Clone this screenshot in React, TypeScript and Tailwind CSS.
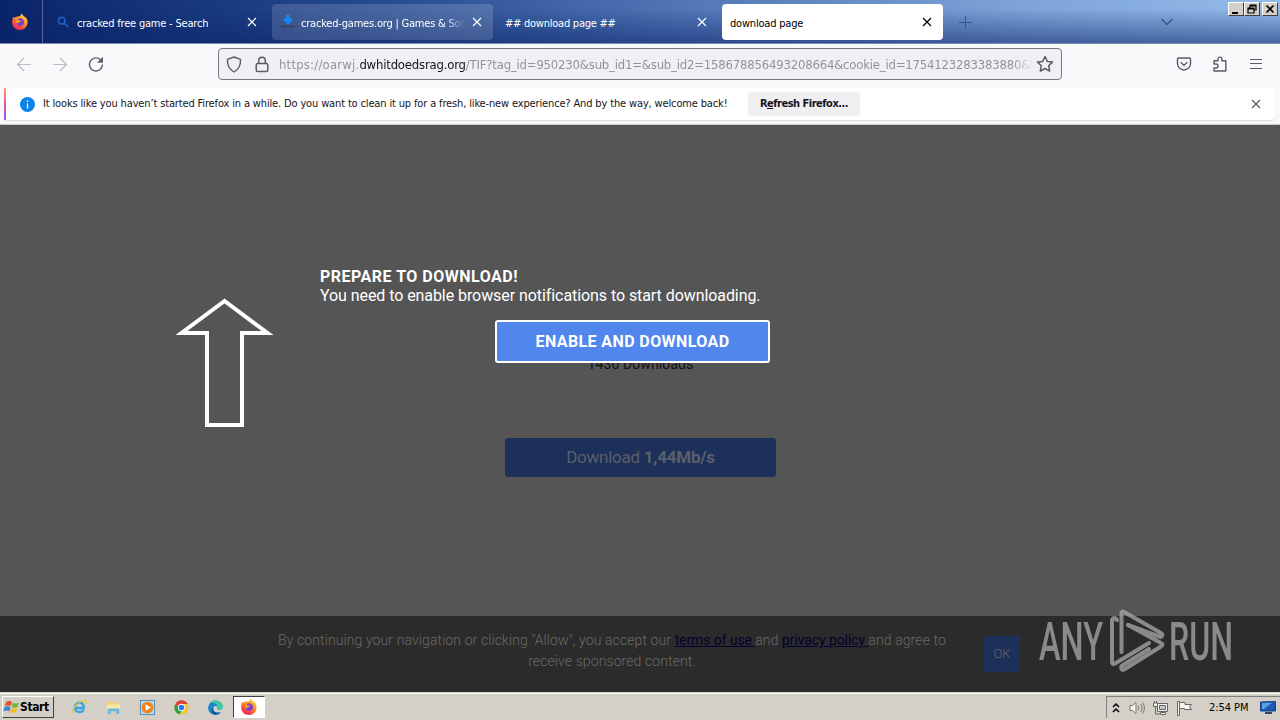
import { type ReactNode } from "react";

type Tab = {
  title: string;
  text: string;
  icon?: ReactNode;
  className: string;
};

function CloseIcon({ className }: { className?: string }) {
  return (
    <svg className={className} width="10" height="10" viewBox="0 0 10 10" fill="none" stroke="currentColor" strokeWidth="1.2">
      <path d="M1 1l8 8M9 1L1 9" />
    </svg>
  );
}

function FirefoxIcon() {
  return (
    <svg width="18" height="18" viewBox="0 0 18 18">
      <defs>
        <linearGradient id="flame" x1="0.85" y1="0" x2="0.25" y2="1">
          <stop offset="0" stopColor="#ffe14a" />
          <stop offset="0.4" stopColor="#ff9a1f" />
          <stop offset="0.75" stopColor="#ff4a3d" />
          <stop offset="1" stopColor="#e0226f" />
        </linearGradient>
      </defs>
      <path fill="url(#flame)" d="M2 4.2C2.6 3.9 3 4.4 3.5 4.8 4.5 3.9 6 3.5 7.4 3.6 8 3 9 2.8 9.6 3 9.4 1.9 10 1 10.8.5c.4 1.7 1.5 2 2.4 3 .8.3 1.300.6 1.800 1.200.9 1 1.500 2.500 1.600 4.300 0 4.500-3.300 8-7.700 8C4.500 17 1.200 13.700 1.200 9.500c0-2 .3-3.600.8-5.300z" />
      <path fill="#7a3fd6" d="M9 5.200c2.600 0 4.100 1.800 4.100 4S11.400 13 9.200 13 5.300 11.500 5.300 9.300c1 .6 2 .3 2.900-.5L6.500 7.200C6.900 6 7.800 5.200 9 5.200z" />
      <path fill="#ff9a1f" d="M5 7.200c1-.6 2.200-.4 3 .1l2 .4c-.2 1-1.400 1.200-2 1.600-.5 1.200-2 1-3.200.3z" />
    </svg>
  );
}

function SearchIcon() {
  return (
    <svg width="12" height="12" viewBox="0 0 12 12" fill="none" stroke="#1c62c4" strokeWidth="1.7">
      <circle cx="4.700" cy="4.700" r="3.300" />
      <path d="M7.200 7.200l4 4" />
    </svg>
  );
}

function DownloadIcon() {
  return (
    <svg width="16" height="14" viewBox="0 0 16 14">
      <path fill="#3c4668" d="M1 10h14v3H1z" />
      <path fill="#1489f5" d="M6 0h4v4h3.500L8 9.500 2.500 4H6z" />
    </svg>
  );
}

const tabs: Tab[] = [
  { title: "cracked free game - Search", text: "tracking-[-0.2px]", icon: <SearchIcon />, className: "pl-[10px] gap-2 text-white" },
  { title: "cracked-games.org | Games & Sof", text: "tracking-[-0.2px] w-[166px] [mask-image:linear-gradient(to_left,transparent_2px,#000_22px)]", icon: <DownloadIcon />, className: "pl-2 gap-[5px] bg-white/15 text-white" },
  { title: "## download page ##", text: "tracking-[-0.24px]", className: "pl-2 text-white" },
  { title: "download page", text: "tracking-[-0.2px]", className: "pl-2 bg-white text-black" },
];

function TabBar() {
  return (
    <header className="flex h-11 shrink-0 border-b border-[#7c8cab] bg-[linear-gradient(to_bottom,rgba(10,36,106,0)_20%,rgba(10,36,106,0.55)),linear-gradient(to_right,#0a246a,#24488c_28%,#5478b8_55%,#7ea4d8_80%,#93bbea)]">
      <div className="flex w-[43px] items-center justify-center border-r border-white/30 pr-[2px]">
        <FirefoxIcon />
      </div>
      <div className="flex gap-1 py-1 pl-1">
        {tabs.map(tab => (
          <div key={tab.title} className={`flex h-9 w-[221px] items-center rounded-sm pr-[11px] ${tab.className}`}>
            {tab.icon}
            <span className={`overflow-hidden whitespace-nowrap pt-1 text-[11px] ${tab.text}`}>{tab.title}</span>
            <CloseIcon className="ml-auto shrink-0" />
          </div>
        ))}
      </div>
      <svg className="ml-4 mt-4 shrink-0 text-[#3d5685]" width="13" height="13" viewBox="0 0 13 13" fill="none" stroke="currentColor">
        <path d="M6.500 0v13M0 6.500h13" />
      </svg>
      <svg className="ml-auto mt-[18px] shrink-0 text-[#3b5887]" width="14" height="9" viewBox="0 0 14 9" fill="none" stroke="currentColor" strokeWidth="1.500">
        <path d="M1.500 1L7 6.500 12.500 1" />
      </svg>
      <div className="ml-[54px] mt-[2px] flex h-[14px] pr-[2px]">
        <WindowButton>
          <path d="M3 10h6" strokeWidth="2" />
        </WindowButton>
        <WindowButton>
          <path d="M5 2h6v5H9M5 2v3M5 3h6M3 5h6v5H3zM3 6h6" />
        </WindowButton>
        <span className="w-[2px]" />
        <WindowButton>
          <path d="M3.500 2.500l7 7M10.500 2.500l-7 7" strokeWidth="1.700" />
        </WindowButton>
      </div>
    </header>
  );
}

function WindowButton({ children }: { children: ReactNode }) {
  return (
    <button className="h-[14px] w-4 border border-b-[#404040] border-l-white border-r-[#404040] border-t-white bg-[#d4d0c8]">
      <svg width="14" height="12" viewBox="0 0 14 12" fill="none" stroke="#000" strokeWidth="1.200">
        {children}
      </svg>
    </button>
  );
}

function Toolbar() {
  return (
    <div className="flex h-[44px] shrink-0 items-start bg-[#f9f9fb] text-[#5b5b66]">
      <div className="flex w-[218px] gap-5 pl-4 pt-3">
        <svg className="text-[#bcbcc2]" width="16" height="16" viewBox="0 0 16 16" fill="none" stroke="currentColor" strokeWidth="1.200">
          <path d="M15 8.500H1.500M8 2L1.500 8.500 8 15" />
        </svg>
        <svg className="text-[#bcbcc2]" width="16" height="16" viewBox="0 0 16 16" fill="none" stroke="currentColor" strokeWidth="1.200">
          <path d="M1 8.500h13.500M8 2l6.500 6.500L8 15" />
        </svg>
        <svg width="16" height="16" viewBox="0 0 16 16" fill="none" stroke="currentColor" strokeWidth="1.400">
          <path d="M13.200 4.500A6.500 6.500 0 1 0 14.500 8.500" />
          <path fill="currentColor" stroke="none" d="M15 .8v6H9z" />
        </svg>
      </div>
      <div className="mt-1 flex h-8 w-[844px] items-center rounded-[4px] border border-[#75757e] bg-[#f0f0f4] pl-[7px] pr-[7px]">
        <svg className="shrink-0" width="16" height="17" viewBox="0 0 16 17" fill="none" stroke="currentColor" strokeWidth="1.400">
          <path d="M8 1l6.500 2.400c.4 5.500-1.500 9.800-6.500 12.600C3 13.200 1.100 8.900 1.500 3.400z" strokeLinejoin="round" />
        </svg>
        <svg className="ml-3 shrink-0" width="16" height="17" viewBox="0 0 16 17" fill="none" stroke="currentColor" strokeWidth="1.500">
          <rect x="2.200" y="7.500" width="11.600" height="8" rx="1.500" />
          <path d="M4.700 7.500V4.500a3.300 3.300 0 0 1 6.600 0v3" />
        </svg>
        <div className="ml-[9px] w-[757px] overflow-hidden whitespace-nowrap pt-px text-[13px] tracking-[-0.2px] text-[#929299] [mask-image:linear-gradient(to_left,transparent_3px,#000_24px)]">
          <span className="tracking-[0.2px]">https://oarwj.</span>
          <span className="text-[#15141a]">dwhitdoedsrag.org</span>/TIF?tag_id=950230&amp;sub_id1=&amp;sub_id2=158678856493208664&amp;cookie_id=1754123283383880&amp;l
        </div>
        <svg className="ml-auto shrink-0" width="18" height="18" viewBox="0 0 18 18" fill="none" stroke="currentColor" strokeWidth="1.500" strokeLinejoin="round">
          <path d="M9 1.500l2.300 4.900 5.200.7-3.800 3.700 1 5.300L9 13.500l-4.700 2.600 1-5.300L1.500 7.100l5.200-.7z" />
        </svg>
      </div>
      <div className="ml-auto flex gap-5 pr-4 pt-3">
        <svg width="16" height="16" viewBox="0 0 16 16" fill="none" stroke="currentColor" strokeWidth="1.400" strokeLinejoin="round">
          <path d="M2.500 2h11c.6 0 1 .4 1 1v4.500a6.500 6.500 0 0 1-13 0V3c0-.6.4-1 1-1z" />
          <path d="M4.700 6.300L8 9.400l3.300-3.100" />
        </svg>
        <svg width="16" height="16" viewBox="0 0 16 16" fill="none" stroke="currentColor" strokeWidth="1.400" strokeLinejoin="round">
          <path d="M2 7V4.800h4V3a1.900 1.900 0 0 1 3.800 0v1.800h4V15H2v-3h2a2 2 0 0 0 0-4H2z" />
        </svg>
        <svg width="16" height="16" viewBox="0 0 16 16" fill="none" stroke="currentColor" strokeWidth="1.200">
          <path d="M2 3.500h12M2 7.500h12M2 12.500h12" />
        </svg>
      </div>
    </div>
  );
}

function NotificationBar() {
  return (
    <div className="h-[37px] shrink-0 border-b border-[#cccccc] bg-[#f9f9fb] pl-1 pr-[5px]">
      <div className="flex h-8 items-center rounded-[4px] bg-white shadow-[0_1px_1px_rgba(0,0,0,0.12)]">
        <span className="h-8 w-[2px] bg-linear-to-b from-[#ff9a6b] via-[#e0509a] to-[#9059ff]" />
        <svg className="ml-[14px]" width="15" height="15" viewBox="0 0 15 15">
          <circle cx="7.500" cy="7.500" r="7.500" fill="#0b84e8" />
          <path d="M7.500 3.500v1.500M7.500 6.500v5" stroke="#fff" strokeWidth="1.300" />
        </svg>
        <span className="ml-2 w-[705px] whitespace-nowrap text-[11px] tracking-[-0.145px] text-[#15141a]">
          It looks like you haven’t started Firefox in a while. Do you want to clean it up for a fresh, like-new experience? And by the way, welcome back!
        </span>
        <button className="h-6 w-28 rounded-[4px] bg-[#efeff1] pt-px text-[11px] font-bold tracking-[-0.5px] text-[#15141a]">
          R<u>e</u>fresh Firefox...
        </button>
        <CloseIcon className="ml-auto mr-[14px] text-[#5b5b66]" />
      </div>
    </div>
  );
}

function AnyRunLogo() {
  return (
    <svg className="absolute bottom-[17px] right-[36px]" width="206" height="66" viewBox="0 0 206 66" fill="none" opacity="0.75">
      <g fill="#aaaaaa" fontFamily="Roboto" fontWeight="500" fontSize="53">
        <text x="1" y="51" textLength="64" lengthAdjust="spacingAndGlyphs">ANY</text>
        <text x="131" y="51" textLength="64" lengthAdjust="spacingAndGlyphs">RUN</text>
      </g>
      <g stroke="#aaaaaa" strokeWidth="4" strokeLinecap="round" strokeLinejoin="round">
        <path d="M79 11l-2-2c-2 0-3 1-3 3v41c0 2 1 2.500 3 1.500L111 34" />
        <path d="M83.500 43V5c0-3 1-3 3.500-1.600L123 24c2.500 1.500 1 5-2 3.500L90 16" />
        <path d="M90 16l33 18c2 1 2 2 0 3.500L86 60.500c-3 1.500-4-3-1-4.500L111 40" />
      </g>
    </svg>
  );
}

function Page() {
  return (
    <main className="relative flex h-[567px] shrink-0 flex-col bg-[#555555] font-[Roboto,sans-serif]">
      <div className="flex grow flex-col items-center pl-px pt-[229px]">
        <p className="text-[14px] leading-5 tracking-[0.1px] text-[#111111]">1430 Downloads</p>
        <button className="mt-16 h-[39px] w-[271px] rounded-[3px] bg-[#1d3059] text-[17px] tracking-[-0.25px] text-[#5a5f6b]">
          Download <b>1,44Mb/s</b>
        </button>
      </div>
      <footer className="flex h-[76px] items-center bg-[#2b2b2b] pl-[262px]">
        <p className="w-[700px] pb-[6px] text-center text-[14px] font-light leading-[21px] tracking-[0.1px] text-[#6a6a6a]">
          By continuing your navigation or clicking "Allow", you accept our <span className="font-normal tracking-[-0.1px] text-[#04002c] underline">terms of use </span>
          and <span className="font-normal tracking-[-0.1px] text-[#04002c] underline">privacy policy </span>and agree to
          <br />
          receive sponsored content.
        </p>
        <button className="ml-[22px] h-9 w-9 bg-[#1d3059] text-[13px] font-light text-[#60636a]">OK</button>
      </footer>
      <div className="absolute inset-x-0 top-0 flex pl-[175px] pt-[142px] text-white">
        <svg className="mt-[30px] shrink-0" width="99" height="132" viewBox="0 0 99 132" fill="none" stroke="#fff" strokeWidth="4">
          <path d="M49.500 4L6.500 36H32v92h35V36h25.500z" />
        </svg>
        <div className="ml-[46px] w-[450px] whitespace-nowrap text-[16px] leading-[19px]">
          <h1 className="font-bold tracking-[0.5px]">PREPARE TO DOWNLOAD!</h1>
          <p className="tracking-[-0.07px]">You need to enable browser notifications to start downloading.</p>
          <button className="ml-[175px] mt-[15px] h-[43px] w-[275px] rounded-[3px] border-2 border-white bg-[#5186ec] text-[16px] font-bold tracking-[0.4px]">
            ENABLE AND DOWNLOAD
          </button>
        </div>
      </div>
      <AnyRunLogo />
    </main>
  );
}

function Taskbar() {
  return (
    <div className="flex h-7 shrink-0 items-center border-t border-[#d4d0c8] bg-[#d4d0c8] pl-[2px] shadow-[inset_0_1px_0_#fff]">
      <button className="mt-px flex h-[22px] w-[52px] items-center border border-b-[#404040] border-l-white border-r-[#404040] border-t-white text-[12px] font-bold tracking-[-0.4px] text-black">
        <svg className="shrink-0" width="17" height="16" viewBox="0 0 17 16">
          <path fill="#e0592a" d="M3 3c2-1.500 4-1.300 6 0L7.700 7.300c-2-1.200-3.800-1.200-5.900 0z" />
          <path fill="#70b542" d="M10 3.500c2 1.200 4 1.200 6-.2l-1.400 4.500c-2 1.300-3.900 1.200-5.900 0z" />
          <path fill="#3a83d4" d="M1.500 8.200c2-1.300 4-1.200 6 0L6.200 12.500c-2-1.200-4-1.200-6 0z" />
          <path fill="#f5bb26" d="M8.400 8.700c2 1.200 4 1.200 6 0L13 13c-2 1.400-4 1.300-6 0z" />
        </svg>
        Start
      </button>
      <div className="mt-px flex items-center pl-2">
        <TaskIcon>
          <path d="M4 9.500h9.500C13.500 6 11.500 4 9 4S4.200 6 4.200 9s2 4.800 4.800 4.800c2 0 3.500-.8 4.300-2.500" fill="none" stroke="#3aa5e0" strokeWidth="2.500" />
          <path d="M2 15C-.5 11 11-.5 16 2c1 .6.500 2 0 3" fill="none" stroke="#e8c040" strokeWidth="1.200" />
        </TaskIcon>
        <TaskIcon>
          <path fill="#edcf72" d="M2 3h5l1 1h8v9H2z" />
          <path fill="#f8e8a5" d="M2 6h14v6H2z" />
          <path fill="#6bb6df" d="M3 10h12v6h-3v-3H6v3H3z" />
        </TaskIcon>
        <TaskIcon>
          <rect x="1.500" y="1.500" width="15" height="15" fill="#b7dbee" stroke="#5489b0" />
          <circle cx="9" cy="9" r="6.200" fill="#f18418" />
          <path fill="#fff" d="M7 5.500v7l5.500-3.500z" />
        </TaskIcon>
        <TaskIcon>
          <circle cx="9" cy="9" r="7.500" fill="#f5c52b" />
          <path fill="#e23f33" d="M2.500 5.200a7.500 7.500 0 0 1 13 0H9L5.700 11z" />
          <path fill="#2b9c4a" d="M2.500 5.200l3.500 6 3 1.500-2 3.600A7.500 7.500 0 0 1 2.500 5.200z" />
          <circle cx="9" cy="9" r="3.900" fill="#fff" />
          <circle cx="9" cy="9" r="3" fill="#3279e6" />
        </TaskIcon>
        <TaskIcon>
          <path fill="#1688d1" d="M1.200 9C2 4 5 1.500 9 1.500c5 0 7.800 3.600 7.800 6.800 0 2-1.500 3.200-3.600 3.200-2 0-3-.8-2.300-2 .6-3-4.500-3-4.400 1 .2 3 4 5 8 3.500-2 2.600-5 2.900-7.500 2.400C3 15.500 1 12.500 1.200 9z" />
          <path fill="#43c9a0" d="M9 1.500c5 0 7.800 3.600 7.800 6.800 0 2-1.500 3.200-3.600 3.200-2 0-3-.8-2.300-2C12 6 8 3.500 3.500 4.200 5 2.300 7 1.500 9 1.500z" />
          <path fill="#125a9e" d="M6.500 10.500c.2 3 4 5 8 3.500-2 2.600-5 2.900-7.500 2.400-3-2-3-6.400.8-7.900-.8.500-1.300 1-1.300 2z" />
        </TaskIcon>
        <div className="ml-px flex h-[22px] w-8 items-center justify-center border border-b-white border-l-[#404040] border-r-white border-t-[#404040] bg-white">
          <FirefoxIcon />
        </div>
      </div>
      <div className="ml-auto mt-px flex h-[22px] w-[174px] items-center border-l border-t border-[#808080] pl-1 text-black">
        <svg width="10" height="12" viewBox="0 0 10 12" fill="none" stroke="#000" strokeWidth="1.500">
          <path d="M2 5l3-3 3 3M2 10l3-3 3 3" />
        </svg>
        <svg className="ml-2" width="16" height="16" viewBox="0 0 16 16" fill="#f5f4f0" stroke="#777" strokeWidth="1">
          <path d="M1 5.500h2.500L7 2.500v11l-3.500-3H1z" />
          <path fill="none" d="M9 5.500c1 1.500 1 3.500 0 5M11.500 4c2 2.500 2 5.500 0 8M13.500 2.500c2.500 3.500 2.500 7.500 0 11" />
        </svg>
        <svg className="ml-[7px]" width="17" height="16" viewBox="0 0 17 16" fill="#f5f4f0" stroke="#666" strokeWidth="1">
          <path d="M5.500 3.500h10v8h-10z" />
          <path fill="#c8c8c8" d="M7.500 5.500h6v4h-6z" />
          <path d="M8.500 12.500h5v2h-5z" />
          <path d="M1.500 3h4v3.500h-4zM2.500 1v2M4.500 1v2" />
          <path fill="none" d="M3.500 6.500V14H8" />
        </svg>
        <svg className="ml-[7px]" width="17" height="16" viewBox="0 0 17 16" fill="#f5f4f0" stroke="#666" strokeWidth="1">
          <path d="M1.500 1.500h2v14h-2z" />
          <path d="M3.500 2.500h5.500v2h6.500l-2 2.500 2 2.500H8.500V8.500h-5z" />
        </svg>
        <span className="ml-4 whitespace-nowrap pt-0.5 text-[11px] tracking-[-0.05px]">2:54 PM</span>
        <svg className="ml-auto mr-1 shrink-0" width="16" height="14" viewBox="0 0 16 14">
          <path fill="#1c59b5" stroke="#12408a" d="M.5 1l15-.5v9.500H.5z" />
          <path fill="#5d9ee6" d="M2 2l10-.3L4 8H2z" />
          <path fill="#304860" d="M5 11h7v2H5z" />
        </svg>
      </div>
    </div>
  );
}

function TaskIcon({ children }: { children: ReactNode }) {
  return (
    <div className="flex w-[34px] justify-center">
      <svg width="17" height="17" viewBox="0 0 18 18">{children}</svg>
    </div>
  );
}

export default function App() {
  return (
    <div className="flex h-[720px] w-[1280px] flex-col overflow-hidden font-['DejaVu_Sans_Condensed','DejaVu_Sans',sans-serif]">
      <TabBar />
      <Toolbar />
      <NotificationBar />
      <Page />
      <Taskbar />
    </div>
  );
}
